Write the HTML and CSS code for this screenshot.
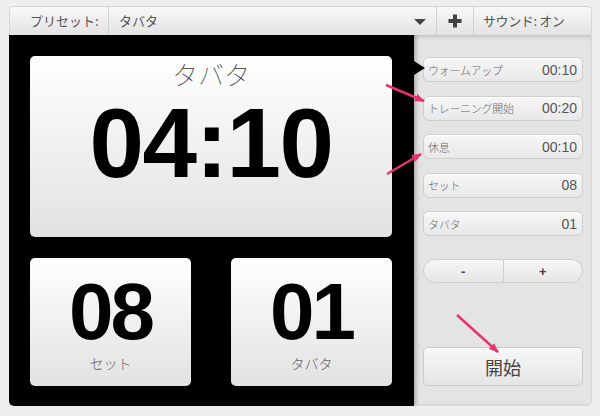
FILE: index.html
```html
<!DOCTYPE html>
<html lang="ja">
<head>
<meta charset="utf-8">
<link rel="stylesheet" href="styles.css">
</head>
<body>
<div class="app">
  <div class="toolbar">
    <div class="tb-label">プリセット:</div>
    <div class="tb-preset"><span>タバタ</span><span class="caret"></span></div>
    <div class="tb-add">
      <svg width="16" height="16" viewBox="0 0 16 16"><path d="M8 1.5v13M1.5 8h13" stroke="#444" stroke-width="4"/></svg>
    </div>
    <div class="tb-sound">サウンド: オン</div>
  </div>
  <div class="main">
    <div class="stage">
      <div class="card big">
        <div class="big-title">タバタ</div>
        <div class="big-time">04:10</div>
      </div>
      <div class="small-row">
        <div class="card small">
          <div class="small-num">08</div>
          <div class="small-label">セット</div>
        </div>
        <div class="card small">
          <div class="small-num">01</div>
          <div class="small-label">タバタ</div>
        </div>
      </div>
      <span class="notch"></span>
    </div>
    <div class="panel">
      <div class="rows">
        <div class="row"><span class="row-label">ウォームアップ</span><span class="row-value">00:10</span></div>
        <div class="row"><span class="row-label">トレーニング開始</span><span class="row-value">00:20</span></div>
        <div class="row"><span class="row-label">休息</span><span class="row-value">00:10</span></div>
        <div class="row"><span class="row-label">セット</span><span class="row-value">08</span></div>
        <div class="row"><span class="row-label">タバタ</span><span class="row-value">01</span></div>
      </div>
      <div class="stepper"><span class="step">-</span><span class="step">+</span></div>
      <div class="start">開始</div>
    </div>
  </div>
</div>
<svg class="annot" width="600" height="416" viewBox="0 0 600 416">
  <defs>
    <marker id="ah" markerWidth="10" markerHeight="8" refX="9" refY="4" orient="auto" markerUnits="userSpaceOnUse">
      <path d="M0 0L10 4L0 8z" fill="#e8336d"/>
    </marker>
  </defs>
  <line x1="386" y1="85" x2="424" y2="101" stroke="#e8336d" stroke-width="2.5" marker-end="url(#ah)"/>
  <line x1="387" y1="174" x2="421" y2="154" stroke="#e8336d" stroke-width="2.5" marker-end="url(#ah)"/>
  <line x1="457" y1="315" x2="498" y2="352" stroke="#e8336d" stroke-width="2.5" marker-end="url(#ah)"/>
</svg>
</body>
</html>
```
FILE: styles.css
```css
* { box-sizing: border-box; }
body {
  margin: 0;
  background: #efefef;
  font-family: "Noto Sans CJK JP", "Liberation Sans", sans-serif;
  position: relative;
  width: 600px;
  height: 416px;
  overflow: hidden;
}
.app {
  margin: 6px 0 0 9px;
  width: 583px;
  height: 400px;
  display: flex;
  flex-direction: column;
}
.toolbar {
  height: 29px;
  display: flex;
  align-items: stretch;
  background: linear-gradient(#f8f8f8, #e3e3e3);
  border: 1px solid #d6d6d6;
  border-bottom: none;
  border-radius: 5px 5px 0 0;
  font-size: 13px;
  color: #555;
  line-height: 28px;
}
.tb-label {
  width: 99px;
  padding-left: 20px;
  border-right: 1px solid #d2d2d2;
}
.tb-preset {
  flex: 1;
  display: flex;
  align-items: center;
  justify-content: space-between;
  padding: 0 10px 0 10px;
  border-right: 1px solid #d2d2d2;
}
.caret {
  width: 0;
  height: 0;
  border-left: 6px solid transparent;
  border-right: 6px solid transparent;
  border-top: 6px solid #444;
  margin-top: 2px;
}
.tb-add {
  width: 37px;
  display: flex;
  align-items: center;
  justify-content: center;
  border-right: 1px solid #d2d2d2;
}
.tb-sound {
  padding-left: 9px;
  width: 117px;
  letter-spacing: -0.4px;
}
.main {
  flex: 1;
  display: flex;
}
.stage {
  position: relative;
  width: 405px;
  background: #000;
  border-radius: 0 0 0 5px;
  padding: 21px 22px 20px 21px;
  display: flex;
  flex-direction: column;
  gap: 21px;
}
.notch {
  position: absolute;
  left: 405px;
  top: 26px;
  width: 0;
  height: 0;
  border-left: 11px solid #000;
  border-top: 7px solid transparent;
  border-bottom: 7px solid transparent;
}
.card {
  background: linear-gradient(#ffffff, #e2e2e2);
  border-radius: 5px;
  text-align: center;
}
.big {
  height: 181px;
  padding-top: 3px;
}
.big-title {
  font-size: 26px;
  line-height: 30px;
  color: #333;
  font-weight: 100;
}
.big-time {
  margin-top: 5px;
  font-family: "Liberation Sans", Arial, sans-serif;
  font-weight: bold;
  font-size: 98px;
  line-height: 1;
  letter-spacing: -1.5px;
  color: #000;
}
.small-row {
  display: flex;
  gap: 40px;
}
.small {
  width: 161px;
  height: 128px;
  padding-top: 14px;
}
.small-num {
  font-family: "Liberation Sans", Arial, sans-serif;
  font-weight: bold;
  font-size: 80px;
  line-height: 1;
  letter-spacing: -3px;
  color: #000;
}
.small-label {
  margin-top: 2px;
  font-size: 14px;
  line-height: 18px;
  color: #666;
  font-weight: 300;
}
.panel {
  flex: 1;
  background: #e4e4e4;
  border-radius: 0 0 5px 0;
  border-right: 1px solid #d8d8d8;
  border-bottom: 1px solid #d8d8d8;
  box-shadow: inset 4px 0 4px -2px rgba(0,0,0,0.25), inset 0 4px 4px -2px rgba(0,0,0,0.12);
  padding: 22px 8px 19px 9px;
  display: flex;
  flex-direction: column;
}
.rows {
  display: flex;
  flex-direction: column;
  gap: 13.5px;
}
.row {
  height: 25px;
  display: flex;
  align-items: center;
  justify-content: space-between;
  padding: 0 5px 0 4px;
  background: linear-gradient(#f7f7f7, #e8e8e8);
  border: 1px solid #cfcfcf;
  border-radius: 6px;
  box-shadow: inset 0 1px 0 #fff;
}
.row-label {
  font-size: 11px;
  color: #6a6a6a;
  letter-spacing: -0.3px;
  font-weight: 300;
}
.row-value {
  font-family: "Liberation Sans", Arial, sans-serif;
  font-size: 14px;
  color: #555;
}
.stepper {
  margin-top: 23px;
  height: 24px;
  display: flex;
  border: 1px solid #cfcfcf;
  border-radius: 12px;
  background: linear-gradient(#f7f7f7, #e6e6e6);
  overflow: hidden;
}
.step {
  flex: 1;
  display: flex;
  align-items: center;
  justify-content: center;
  font-family: "Liberation Sans", Arial, sans-serif;
  font-weight: bold;
  font-size: 13px;
  color: #444;
}
.step + .step {
  border-left: 1px solid #cfcfcf;
}
.start {
  margin-top: auto;
  height: 39px;
  display: flex;
  align-items: center;
  justify-content: center;
  border: 1px solid #cccccc;
  border-radius: 5px;
  background: linear-gradient(#f8f8f8, #e5e5e5);
  font-size: 18px;
  color: #444;
}
.annot {
  position: absolute;
  left: 0;
  top: 0;
  pointer-events: none;
}
```
